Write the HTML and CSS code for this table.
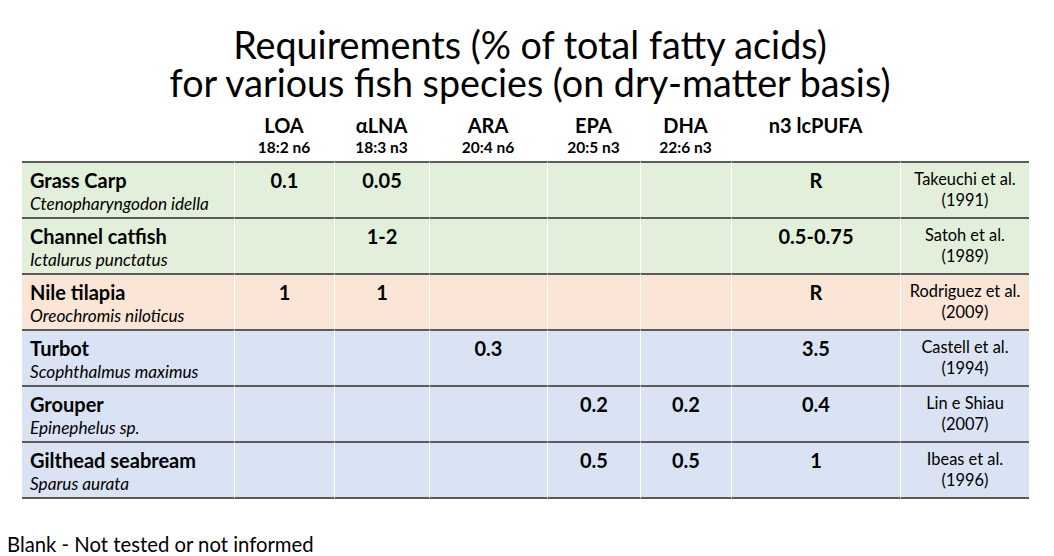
FILE: index.html
```html
<!DOCTYPE html>
<html>
<head>
<meta charset="utf-8">
<link rel="stylesheet" href="styles.css">
</head>
<body>
<div class="page">
  <h1 class="title"><span class="tl">Requirements (% of total fatty acids)</span><span class="tl">for various fish species (on dry-matter basis)</span></h1>
  <div class="grid">
    <div class="hd"></div>
    <div class="hd"><span class="hn">LOA</span><span class="hs">18:2 n6</span></div>
    <div class="hd"><span class="hn">αLNA</span><span class="hs">18:3 n3</span></div>
    <div class="hd"><span class="hn">ARA</span><span class="hs">20:4 n6</span></div>
    <div class="hd"><span class="hn">EPA</span><span class="hs">20:5 n3</span></div>
    <div class="hd"><span class="hn">DHA</span><span class="hs">22:6 n3</span></div>
    <div class="hd"><span class="hn">n3 lcPUFA</span></div>
    <div class="hd"></div>

    <div class="c name g"><span class="sp">Grass Carp</span><span class="sci">Ctenopharyngodon idella</span></div>
    <div class="c v g">0.1</div>
    <div class="c v g">0.05</div>
    <div class="c v g"></div>
    <div class="c v g"></div>
    <div class="c v g"></div>
    <div class="c v g">R</div>
    <div class="c ref g">Takeuchi et al.<br>(1991)</div>

    <div class="c name g"><span class="sp">Channel catfish</span><span class="sci">Ictalurus punctatus</span></div>
    <div class="c v g"></div>
    <div class="c v g">1-2</div>
    <div class="c v g"></div>
    <div class="c v g"></div>
    <div class="c v g"></div>
    <div class="c v g">0.5-0.75</div>
    <div class="c ref g">Satoh et al.<br>(1989)</div>

    <div class="c name p"><span class="sp">Nile tilapia</span><span class="sci">Oreochromis niloticus</span></div>
    <div class="c v p">1</div>
    <div class="c v p">1</div>
    <div class="c v p"></div>
    <div class="c v p"></div>
    <div class="c v p"></div>
    <div class="c v p">R</div>
    <div class="c ref p">Rodriguez et al.<br>(2009)</div>

    <div class="c name b"><span class="sp">Turbot</span><span class="sci">Scophthalmus maximus</span></div>
    <div class="c v b"></div>
    <div class="c v b"></div>
    <div class="c v b">0.3</div>
    <div class="c v b"></div>
    <div class="c v b"></div>
    <div class="c v b">3.5</div>
    <div class="c ref b">Castell et al.<br>(1994)</div>

    <div class="c name b"><span class="sp">Grouper</span><span class="sci">Epinephelus sp.</span></div>
    <div class="c v b"></div>
    <div class="c v b"></div>
    <div class="c v b"></div>
    <div class="c v b">0.2</div>
    <div class="c v b">0.2</div>
    <div class="c v b">0.4</div>
    <div class="c ref b">Lin e Shiau<br>(2007)</div>

    <div class="c name b last"><span class="sp">Gilthead seabream</span><span class="sci">Sparus aurata</span></div>
    <div class="c v b last"></div>
    <div class="c v b last"></div>
    <div class="c v b last"></div>
    <div class="c v b last">0.5</div>
    <div class="c v b last">0.5</div>
    <div class="c v b last">1</div>
    <div class="c ref b last">Ibeas et al.<br>(1996)</div>
  </div>
  <p class="note">Blank - Not tested or not informed</p>
</div>
</body>
</html>
```
FILE: styles.css
```css
html, body {
  margin: 0;
  padding: 0;
  background: #ffffff;
}
body {
  font-family: "Lato", "Open Sans", "DejaVu Sans", sans-serif;
  color: #000;
  width: 1054px;
  height: 556px;
  overflow: hidden;
}
.page {
  display: flex;
  flex-direction: column;
  padding-top: 26px;
}
.title {
  margin: 0;
  font-weight: 400;
  font-size: 37.7px;
  line-height: 38px;
  text-align: center;
  padding-left: 6px;
  white-space: nowrap;
  display: flex;
  flex-direction: column;
  align-items: center;
}
.tl {
  display: block;
  height: 38px;
}
.grid {
  display: grid;
  grid-template-columns: 212px 100px 95px 118px 93px 91px 169px 129px;
  grid-template-rows: 51px repeat(5, 56px) 58px;
  margin-left: 22px;
  margin-top: 8px;
  width: 1007px;
}
.hd {
  display: flex;
  flex-direction: column;
  align-items: center;
  padding-top: 4px;
}
.hn {
  font-weight: 700;
  font-size: 20px;
  line-height: 22px;
}
.hs {
  font-weight: 700;
  font-size: 15.5px;
  line-height: 20px;
  margin-top: 1px;
}
.c {
  border-top: 2px solid #5b5b5b;
  border-left: 1px solid #ffffff;
  box-sizing: border-box;
}
.c.name {
  border-left: none;
  display: flex;
  flex-direction: column;
  padding: 6px 0 0 8px;
  white-space: nowrap;
}
.c.last {
  border-bottom: 2px solid #5b5b5b;
}
.g { background: #e2efda; }
.p { background: #fbe5d6; }
.b { background: #dae3f3; }
.sp {
  font-weight: 700;
  font-size: 20px;
  line-height: 22px;
}
.sci {
  font-style: italic;
  font-size: 17.2px;
  line-height: 22px;
  padding-top: 2px;
}
.v {
  text-align: center;
  font-weight: 700;
  font-size: 20px;
  line-height: 22px;
  padding-top: 6px;
}
.ref {
  text-align: center;
  font-size: 16.4px;
  line-height: 21px;
  padding-top: 5px;
  white-space: nowrap;
}
.note {
  margin: 33px 0 0 7px;
  font-size: 20.3px;
  line-height: 24px;
  white-space: nowrap;
}
```
